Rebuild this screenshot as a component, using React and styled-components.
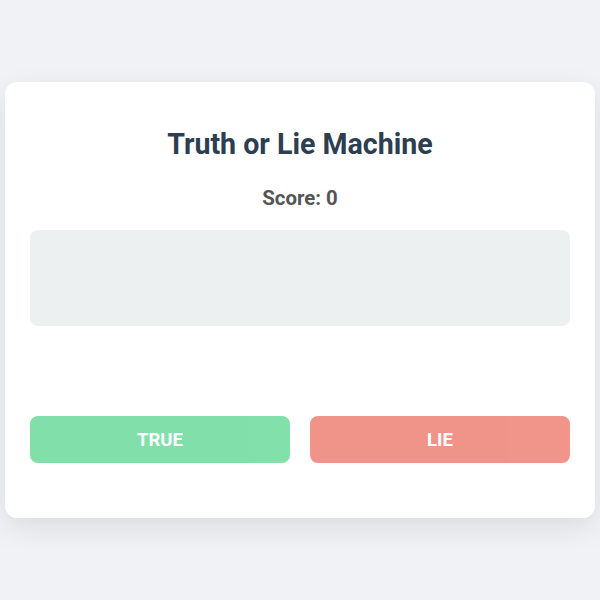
import React, { useState } from "react";
import styled, { createGlobalStyle } from "styled-components";

const GlobalStyle = createGlobalStyle`
  html, body {
    margin: 0;
    padding: 0;
    background: #f0f2f5;
    font-family: Roboto, "Liberation Sans", Arial, sans-serif;
  }
  * { box-sizing: border-box; }
`;

const Page = styled.div`
  min-height: 600px;
  display: flex;
  align-items: center;
  justify-content: center;
  padding: 0 5px;
`;

const Card = styled.div`
  width: 100%;
  background: #ffffff;
  border-radius: 12px;
  box-shadow: 0 10px 30px rgba(0, 0, 0, 0.09);
  padding: 46px 25px 55px;
  display: flex;
  flex-direction: column;
`;

const Title = styled.h1`
  margin: 0;
  font-size: 28.6px;
  line-height: 33px;
  font-weight: 700;
  color: #2c3e50;
  text-align: center;
`;

const Score = styled.div`
  margin-top: 26px;
  font-size: 20.4px;
  line-height: 23px;
  font-weight: 700;
  color: #555555;
  text-align: center;
`;

const Statement = styled.div`
  margin-top: 20px;
  min-height: 96px;
  border-radius: 8px;
  background: #ecf0f1;
  padding: 20px;
  font-size: 18px;
  color: #2c3e50;
  text-align: center;
`;

const Feedback = styled.div`
  height: 90px;
`;

const Buttons = styled.div`
  display: grid;
  grid-template-columns: 1fr 1fr;
  gap: 20px;
`;

const AnswerButton = styled.button`
  height: 47px;
  border: none;
  border-radius: 8px;
  background: ${(p) => p.$color};
  color: #ffffff;
  font-family: inherit;
  font-size: 18.5px;
  font-weight: 700;
  opacity: 0.6;
  cursor: not-allowed;
`;

export default function App() {
  const [score] = useState(0);
  return (
    <>
      <GlobalStyle />
      <Page>
        <Card>
          <Title>Truth or Lie Machine</Title>
          <Score>Score: {score}</Score>
          <Statement />
          <Feedback />
          <Buttons>
            <AnswerButton $color="#2ecc71" disabled>TRUE</AnswerButton>
            <AnswerButton $color="#e74c3c" disabled>LIE</AnswerButton>
          </Buttons>
        </Card>
      </Page>
    </>
  );
}
